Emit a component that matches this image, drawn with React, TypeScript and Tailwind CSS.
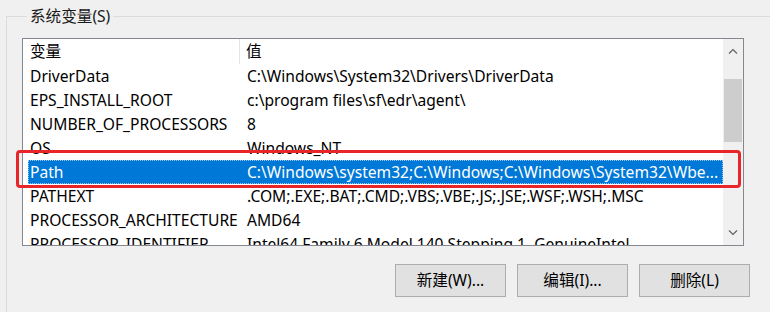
const rows: [string, string][] = [
  ['DriverData', 'C:\\Windows\\System32\\Drivers\\DriverData'],
  ['EPS_INSTALL_ROOT', 'c:\\program files\\sf\\edr\\agent\\'],
  ['NUMBER_OF_PROCESSORS', '8'],
  ['OS', 'Windows_NT'],
  ['Path', 'C:\\Windows\\system32;C:\\Windows;C:\\Windows\\System32\\Wbe...'],
  ['PATHEXT', '.COM;.EXE;.BAT;.CMD;.VBS;.VBE;.JS;.JSE;.WSF;.WSH;.MSC'],
  ['PROCESSOR_ARCHITECTURE', 'AMD64'],
  ['PROCESSOR_IDENTIFIER', 'Intel64 Family 6 Model 140 Stepping 1, GenuineIntel'],
]

function Chevron({ up }: { up?: boolean }) {
  return (
    <svg width="10" height="6" viewBox="0 0 10 6" className="text-[#606060]">
      <path d={up ? 'M1 5.5 L5 1.5 L9 5.5' : 'M1 0.5 L5 4.5 L9 0.5'} fill="none" stroke="currentColor" strokeWidth="1.2" />
    </svg>
  )
}

function Button({ label }: { label: string }) {
  return (
    <button className="w-[111px] h-[33px] bg-[#e1e1e1] border border-[#adadad] text-[15.6px] text-black flex items-center justify-center">
      {label}
    </button>
  )
}

export default function App() {
  return (
    <div
      className="relative w-[770px] h-[312px] overflow-hidden bg-[#f0f0f0] text-black"
      style={{ fontFamily: '"Noto Sans", "Noto Sans CJK SC", sans-serif' }}
    >
      <fieldset className="ml-[6px] mt-[6px] w-[800px] h-[400px] border-l border-t border-[#dcdcdc] pl-[15px]">
        <legend className="ml-[5px] px-[3px] text-[15.6px] leading-[20px] text-[#1a1a1a]">系统变量(S)</legend>

        {/* 列表 */}
        <div className="mt-[12px] w-[722px] h-[208px] border border-[#828790] bg-white flex">
          <div className="flex-1 overflow-hidden text-[15.6px]">
            <div className="flex h-[25px] items-center">
              <div className="w-[217px] pl-[7px] border-r border-[#e5e5e5] h-full flex items-center">变量</div>
              <div className="pl-[6px]">值</div>
            </div>
            {rows.map(([name, value]) => {
              const sel = name === 'Path'
              return (
                <div key={name} className="pl-[5px] h-[24px]">
                  <div
                    className={
                      sel
                        ? 'flex h-full items-center pt-[1px] bg-[#0078d7] text-white outline-1 outline-dotted outline-[#9cc7ee] -outline-offset-1'
                        : 'flex h-full items-center pt-[1px]'
                    }
                  >
                    <div className="w-[212px] pl-[2px] whitespace-nowrap overflow-hidden">{name}</div>
                    <div className="pl-[7px] whitespace-nowrap">{value}</div>
                  </div>
                </div>
              )
            })}
          </div>
          {/* 滚动条 */}
          <div className="w-[20px] bg-[#f0f0f0] flex flex-col items-center">
            <div className="h-[24px] flex items-center">
              <Chevron up />
            </div>
            <div className="mt-[16px] w-[18px] h-[63px] bg-[#cdcdcd]" />
            <div className="flex-1" />
            <div className="h-[24px] flex items-center">
              <Chevron />
            </div>
          </div>
        </div>

        {/* 按钮 */}
        <div className="mt-[18px] w-[728px] flex justify-end gap-[11px]">
          <Button label="新建(W)..." />
          <Button label="编辑(I)..." />
          <Button label="删除(L)" />
        </div>
      </fieldset>

      {/* 红色标注框 */}
      <div className="absolute left-[16px] top-[150px] w-[725px] h-[38px] border-[3px] border-[#e8262a] rounded-[4px]" />
    </div>
  )
}
